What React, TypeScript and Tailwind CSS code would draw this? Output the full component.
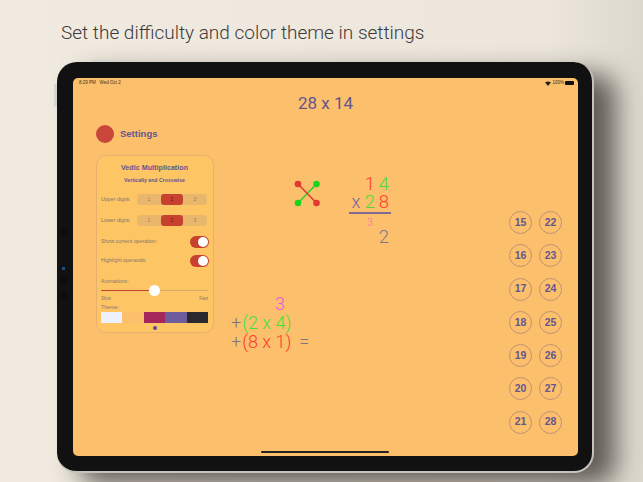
const F = '[font-family:"Liberation_Sans",Arial,sans-serif]';

function Seg() {
  return (
    <div className="flex w-[70px] h-[11px] rounded-[3px] bg-[#e9b76b] text-[5px] text-[#8d7a78] items-center">
      <span className="flex-1 text-center">1</span>
      <span className="w-[22px] h-[11px] rounded-[3px] bg-[#c8412f] text-center leading-[11px] text-[#5c1d18]">2</span>
      <span className="flex-1 text-center">3</span>
    </div>
  );
}

function Toggle() {
  return (
    <div className="w-[19px] h-[12px] rounded-full bg-[#c8412f] flex items-center justify-end pr-[1px] -mr-[2px]">
      <div className="w-[10px] h-[10px] rounded-full bg-white" />
    </div>
  );
}

function Circle({ n }: { n: number }) {
  return (
    <div className="w-[23px] h-[23px] rounded-full border border-[#bd9276] flex items-center justify-center text-[10.5px] font-bold text-[#65558f]">
      {n}
    </div>
  );
}

export default function App() {
  const left = [15, 16, 17, 18, 19, 20, 21];
  return (
    <div className={`w-[643px] h-[482px] overflow-hidden bg-[linear-gradient(90deg,#f0eae0,#ece6dc_85%,#ddd8ce)] ${F}`}>
      <div className="pl-[61px] pt-[20px] h-[62px] text-[19px] leading-[26px] text-[#3b3b3b] font-['Roboto',sans-serif] font-light">
        Set the difficulty and color theme in settings
      </div>
      <div className="ml-[57px] w-[537px] h-[411px] relative">
        <div className="absolute left-[36px] -top-[2px] w-[18px] h-[2px] bg-[#d6d4cf]" />
        <div className="absolute left-[60px] -top-[2px] w-[18px] h-[2px] bg-[#d6d4cf]" />
        <div className="absolute -left-[3px] top-[22px] w-[3px] h-[22px] bg-[#d6d4cf]" />
        <div className="absolute left-[4px] top-[166px] w-[7px] h-[7px] rounded-full bg-[#0c0c0c] z-10" />
        <div className="absolute left-[5px] top-[205px] w-[3px] h-[3px] bg-[#1d4f80] z-10" />
        <div className="absolute left-[3px] top-[215px] w-[7px] h-[7px] rounded-full bg-[#0c0c0c] z-10" />
        <div className="absolute left-[4px] top-[230px] w-[6px] h-[6px] rounded-full bg-[#0c0c0c] z-10" />
        <div className="w-full h-full rounded-[20px] bg-[#111111] border-r-2 border-b-2 border-[#c4c3c0] p-[16px] pr-[14px] pb-[14px] shadow-[22px_12px_26px_rgba(40,35,30,0.7)]">
          <div className="w-[505px] h-[378px] rounded-[5px] bg-[#fcbf6c] flex flex-col relative">
            <div className="h-[8px] mt-[1px] flex items-center justify-between pl-[6px] pr-[4px] text-[4.5px] text-[#3a3020]">
              <span>8:29 PM&nbsp;&nbsp; Wed Oct 2</span>
              <span className="flex items-center gap-[1px]">
                <svg width="6" height="5" viewBox="0 0 6 5"><path d="M0 1.5Q3 -0.5 6 1.5L3 5Z" fill="#2a2418" /></svg>
                <span>100%</span>
                <span className="w-[9px] h-[4px] rounded-[1px] bg-[#111]" />
              </span>
            </div>
            <div className="text-center text-[17px] leading-[20px] mt-[6px] text-[#65558f] font-['Roboto',sans-serif]">28 x 14</div>
            <div className="flex flex-1 mt-[12px]">
              <div className="ml-[23px] w-[118px] shrink-0">
                <div className="flex items-center gap-[6px]">
                  <div className="w-[18px] h-[18px] rounded-full bg-[#c9463a]" />
                  <span className="text-[9.5px] font-bold text-[#65558f]">Settings</span>
                </div>
                <div className="mt-[12px] h-[178px] rounded-[10px] bg-[#fdc564] border border-[#e8b070] pl-[4px] pr-[5px] pt-[7px] text-[5.3px] text-[#8a7570]">
                  <div className="text-center text-[7.2px] font-bold text-[#65558f] leading-[9px]">Vedic Multiplication</div>
                  <div className="text-center text-[5.2px] font-bold text-[#65558f] mt-[5px] leading-[7px]">Vertically and Crosswise</div>
                  <div className="flex justify-between items-center mt-[10px] pr-[1px]"><span>Upper digits:</span><Seg /></div>
                  <div className="flex justify-between items-center mt-[10px] pr-[1px]"><span>Lower digits:</span><Seg /></div>
                  <div className="flex justify-between items-center mt-[10px] pr-[1px]"><span>Show current operation:</span><Toggle /></div>
                  <div className="flex justify-between items-center mt-[7px] pr-[1px]"><span>Highlight operands:</span><Toggle /></div>
                  <div className="mt-[11px] leading-[7px]">Animations:</div>
                  <div className="flex items-center h-[11px]">
                    <div className="w-[49px] h-[1px] bg-[#c8412f]" />
                    <div className="w-[11px] h-[11px] rounded-full bg-white shrink-0 -ml-[1px]" />
                    <div className="flex-1 h-[1px] bg-[#d9ab6a]" />
                  </div>
                  <div className="flex justify-between text-[4.5px] leading-[5px]"><span>Slow</span><span>Fast</span></div>
                  <div className="mt-[3px] leading-[7px]">Theme:</div>
                  <div className="flex h-[11px] mt-[1px] w-[107px]">
                    <div className="flex-1 bg-[#eef0fb]" />
                    <div className="flex-1 bg-[#fcbf6c]" />
                    <div className="flex-1 bg-[#a5265a]" />
                    <div className="flex-1 bg-[#6d5b9b]" />
                    <div className="flex-1 bg-[#2a2a2e]" />
                  </div>
                  <div className="w-[4px] h-[4px] rounded-full bg-[#5a4a9a] mx-auto mt-[3px]" />
                </div>
              </div>
              <div className="flex-1 font-['Roboto',sans-serif] font-light">
                <div className="flex mt-[47px] ml-[79px]">
                  <svg width="29" height="29" viewBox="0 0 29 29" className="mt-[7px] shrink-0">
                    <line x1="23.5" y1="5" x2="5" y2="24" stroke="#32d02c" strokeWidth="1.6" />
                    <line x1="5" y1="5" x2="23.5" y2="24" stroke="#dd3a32" strokeWidth="1.6" />
                    <circle cx="5" cy="5" r="3.3" fill="#e0392f" />
                    <circle cx="23.5" cy="24" r="3.3" fill="#e0392f" />
                    <circle cx="23.5" cy="5" r="3.3" fill="#1bd41b" />
                    <circle cx="5" cy="24" r="3.3" fill="#1bd41b" />
                  </svg>
                  <div className="ml-[27px] w-[42px] text-[18.5px] leading-[18px] text-center">
                    <div className="grid grid-cols-3 mt-[3px]">
                      <span />
                      <span className="text-[#ff3b30]">1</span>
                      <span className="text-[#4cd93b]">4</span>
                    </div>
                    <div className="grid grid-cols-3 border-b-2 border-[#7f6b94] pb-[1px]">
                      <span className="text-[#7a6a96]">x</span>
                      <span className="text-[#4cd93b]">2</span>
                      <span className="text-[#ff3b30]">8</span>
                    </div>
                    <div className="grid grid-cols-3 text-[10px] leading-[12px] mt-[3px] text-[#ff5fc0]">
                      <span />
                      <span>3</span>
                    </div>
                    <div className="grid grid-cols-3 text-[#7f7488] -mt-[1px]">
                      <span />
                      <span />
                      <span>2</span>
                    </div>
                  </div>
                </div>
                <div className="ml-[17px] mt-[48px] text-[18px] leading-[19px] whitespace-nowrap">
                  <div className="pl-[44px] text-[#f050e0]">3</div>
                  <div><span className="text-[#7f7488] mr-[1px]">+</span><span className="text-[#46e03a]">(2 x 4)</span></div>
                  <div><span className="text-[#7f7488] mr-[1px]">+</span><span className="text-[#ff3b30]">(8 x 1)</span><span className="text-[#7f7488] ml-[8px]">=</span></div>
                </div>
              </div>
              <div className="shrink-0 w-[53px] mr-[16px] mt-[86px] grid grid-cols-2 gap-x-[7px] gap-y-[10.3px] content-start">
                {left.map((n) => (
                  <div key={n} className="contents">
                    <Circle n={n} />
                    <Circle n={n + 7} />
                  </div>
                ))}
              </div>
            </div>
            <div className="absolute bottom-[3px] left-[188px] w-[128px] h-[2px] rounded-full bg-[#222]" />
          </div>
        </div>
      </div>
    </div>
  );
}
